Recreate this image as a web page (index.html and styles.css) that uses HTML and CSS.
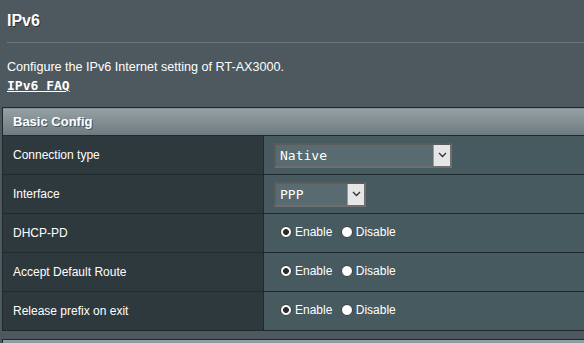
FILE: index.html
```html
<!DOCTYPE html>
<html lang="en">
<head>
  <meta charset="UTF-8" />
  <title>IPv6</title>
  <link rel="stylesheet" href="styles.css">
</head>
<body>
  <div class="page">
    <div class="intro">
      <h1 class="page-title">IPv6</h1>
      <div class="splitline"></div>
      <p class="page-desc">Configure the IPv6 Internet setting of RT-AX3000.</p>
      <a href="#" class="faq-link">IPv6 FAQ</a>
    </div>

    <!-- Basic Config -->
    <table class="form-table">
      <thead>
        <tr>
          <th colspan="2">Basic Config</th>
        </tr>
      </thead>
      <tbody>
        <tr>
          <td class="label">Connection type</td>
          <td class="field">
            <div class="select select-wide">
              <select>
                <option>Native</option>
              </select>
              <span class="select-btn">
                <svg width="9" height="6" viewBox="0 0 9 6"><path d="M1 1 L4.5 4.5 L8 1" fill="none" stroke="#333" stroke-width="1.3"/></svg>
              </span>
            </div>
          </td>
        </tr>
        <tr>
          <td class="label">Interface</td>
          <td class="field">
            <div class="select select-short">
              <select>
                <option>PPP</option>
              </select>
              <span class="select-btn">
                <svg width="9" height="6" viewBox="0 0 9 6"><path d="M1 1 L4.5 4.5 L8 1" fill="none" stroke="#333" stroke-width="1.3"/></svg>
              </span>
            </div>
          </td>
        </tr>
        <tr>
          <td class="label">DHCP-PD</td>
          <td class="field">
            <label class="radio"><input type="radio" name="dhcppd" checked>Enable</label>
            <label class="radio"><input type="radio" name="dhcppd">Disable</label>
          </td>
        </tr>
        <tr>
          <td class="label">Accept Default Route</td>
          <td class="field">
            <label class="radio"><input type="radio" name="defroute" checked>Enable</label>
            <label class="radio"><input type="radio" name="defroute">Disable</label>
          </td>
        </tr>
        <tr>
          <td class="label">Release prefix on exit</td>
          <td class="field">
            <label class="radio"><input type="radio" name="release" checked>Enable</label>
            <label class="radio"><input type="radio" name="release">Disable</label>
          </td>
        </tr>
      </tbody>
    </table>

    <div class="next-header"></div>
  </div>
</body>
</html>
```

FILE: styles.css
```css
* {
  margin: 0;
  padding: 0;
  box-sizing: border-box;
}

body {
  font-family: 'Liberation Sans', Arial, sans-serif;
  background: #4d595e;
  color: #ffffff;
  overflow: hidden;
}

.page {
  padding-left: 2px;
}

/* Intro */
.intro {
  padding-left: 5px;
}

.page-title {
  margin-top: 11px;
  font-size: 16px;
  line-height: 19px;
  font-weight: 700;
  text-shadow: 1px 1px 0 #333;
}

.splitline {
  margin-top: 12px;
  height: 1px;
  background: #6b787d;
}

.page-desc {
  margin-top: 16px;
  font-size: 12.6px;
  line-height: 16px;
}

.faq-link {
  display: inline-block;
  margin-top: 3px;
  font-family: 'DejaVu Sans Mono', monospace;
  font-size: 13px;
  font-weight: 700;
  line-height: 16px;
  color: #ffffff;
  text-decoration: underline;
}

/* Form table */
.form-table {
  margin-top: 13px;
  width: 100%;
  border-collapse: collapse;
  border: 1px solid #20292c;
  border-right: none;
}

.form-table th {
  height: 28px;
  padding: 0 10px;
  text-align: left;
  font-size: 13px;
  font-weight: 700;
  text-shadow: 1px 1px 0 #4a5559;
  background: linear-gradient(to bottom, #97a1a5, #6c7a7f);
  border-bottom: 1px solid #20292c;
}

.form-table td {
  height: 39px;
  padding: 0 10px;
  border: 1px solid #20292c;
  font-size: 12px;
  vertical-align: middle;
}

.form-table td.field {
  border-right: none;
  background: #475a5f;
}

.form-table td.label {
  width: 261px;
  background: #2e393e;
}

/* Select */
.select {
  position: relative;
  display: flex;
  height: 25px;
  border: 2px solid #6e6e6e;
  border-top-color: #5c5c5c;
  border-left-color: #5c5c5c;
  background: #576b70;
}

.select-wide {
  width: 178px;
}

.select-short {
  width: 92px;
}

.select select {
  appearance: none;
  -webkit-appearance: none;
  width: 100%;
  height: 100%;
  padding-left: 4px;
  border: none;
  outline: none;
  background: transparent;
  color: #ffffff;
  font-family: 'DejaVu Sans Mono', monospace;
  font-size: 13px;
}

.select-btn {
  position: absolute;
  top: 0;
  right: 0;
  width: 17px;
  height: 21px;
  display: flex;
  align-items: center;
  justify-content: center;
  background: #e6e6e6;
  border-left: 1px solid #9a9a9a;
  pointer-events: none;
}

/* Radios */
.radio {
  display: inline-flex;
  align-items: center;
  margin-left: 6px;
  color: #ffffff;
  font-size: 12px;
}

.radio input {
  appearance: none;
  -webkit-appearance: none;
  width: 12px;
  height: 12px;
  margin-right: 3px;
  border-radius: 50%;
  background: #ffffff;
  border: 1px solid #3a3a3a;
}

.radio input:checked {
  background: radial-gradient(circle, #2b2b2b 0, #2b2b2b 2.6px, #ffffff 3.2px);
}

.radio + .radio {
  margin-left: 5px;
}

/* Next section */
.next-header {
  margin-top: 8px;
  height: 6px;
  border: 1px solid #20292c;
  border-right: none;
  background: linear-gradient(to bottom, #97a1a5, #8a9599);
}
```
